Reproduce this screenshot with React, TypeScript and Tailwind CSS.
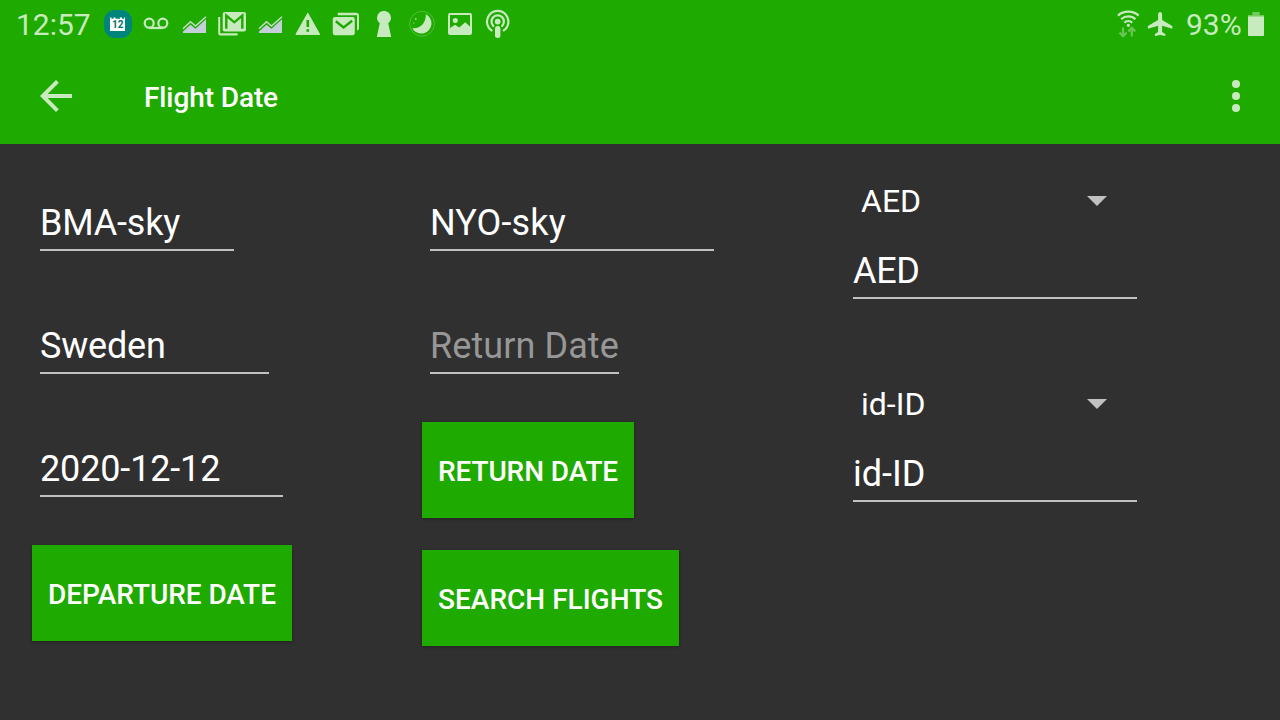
import type { ReactNode } from "react";

const GREEN = "#1faa00";
const TINT = "#c7eabf";

function Slot({ children }: { children: ReactNode }) {
  return (
    <svg width="38" height="48" viewBox="0 0 38 48" fill={TINT} className="block shrink-0">
      {children}
    </svg>
  );
}

function CalendarIcon() {
  return (
    <Slot>
      <rect x="5" y="10" width="28" height="28" rx="11" fill="#00857a" />
      <path d="M11 17.500h1.500v1.300h2v-1.300h2v1.300h4.500v-1.300h2v1.300h2v-1.300H26V31H11z" fill="#fff" />
      <text x="18.700" y="28.400" textAnchor="middle" fontFamily="Roboto, sans-serif" fontSize="10" fontWeight="700" fill="#00736a">12</text>
    </Slot>
  );
}

function VoicemailIcon() {
  return (
    <Slot>
      <g fill="none" stroke={TINT} strokeWidth="2.2">
        <circle cx="12.2" cy="23.2" r="4.5" />
        <circle cx="25.8" cy="23.2" r="4.5" />
        <path d="M12.2 28h13.6" />
      </g>
    </Slot>
  );
}

function ChartIcon() {
  return (
    <Slot>
      <path d="M8 33v-1.500l7.500-6.800 5 4L31 19.300V33z" fill="#c5cfdc" />
      <path d="M8 28.800l7.500-7 5 4.200L31 16.800" fill="none" stroke="#c5dcc8" strokeWidth="1.500" />
    </Slot>
  );
}

function GmailIcon() {
  return (
    <Slot>
      <path d="M5.2 17h2v16.300h17.400v2.200H7.200a2 2 0 0 1-2-2z" />
      <rect x="9.700" y="12" width="23.300" height="19.500" rx="2" />
      <path d="M13.300 28.800V15.500l8 6.800 8-6.800v13.300" fill="none" stroke={GREEN} strokeWidth="2.400" />
    </Slot>
  );
}

function WarningIcon() {
  return (
    <Slot>
      <path d="M18.800 13.200 30.700 34.400H6.900z" stroke={TINT} strokeWidth="1" strokeLinejoin="round" />
      <path d="M17.500 20h2.600v7h-2.600zM17.500 29.200h2.600v2.600h-2.600z" fill={GREEN} />
    </Slot>
  );
}

function MailIcon() {
  return (
    <Slot>
      <path d="M10.800 12.800H29a3 3 0 0 1 3 3v12.500a2.400 2.400 0 0 1-2 2.300V15.200H10.800z" />
      <rect x="5.800" y="17" width="22" height="18.200" rx="2.200" />
      <path d="M8.800 21.200l7.800 6.200 8.500-6.600" fill="none" stroke={GREEN} strokeWidth="2.400" />
    </Slot>
  );
}

function KeyholeIcon() {
  return (
    <Slot>
      <path d="M19 11a6.800 6.800 0 0 1 4.200 12.200L26.200 37H11.800l3-13.800A6.800 6.800 0 0 1 19 11z" />
    </Slot>
  );
}

function MoonIcon() {
  return (
    <Slot>
      <circle cx="19" cy="23.800" r="12.400" fill="none" stroke={TINT} strokeOpacity=".3" strokeWidth="1" />
      <path d="M22.800 14.200A10.200 10.200 0 1 1 9.300 28.200C17 29 23.200 23 22.800 14.200z" />
      <circle cx="12.800" cy="18.800" r=".9" fillOpacity=".9" />
      <circle cx="10.800" cy="23.200" r=".8" fillOpacity=".5" />
    </Slot>
  );
}

function PictureIcon() {
  return (
    <Slot>
      <rect x="8" y="14" width="22" height="20" rx="1" fill="none" stroke={TINT} strokeWidth="2" />
      <circle cx="14.300" cy="20.600" r="2.500" />
      <path d="M8 34v-5.300l6-4 4.200 2.700 6-5.200 5.800 5.400V34z" />
    </Slot>
  );
}

function PodcastIcon() {
  return (
    <Slot>
      <g fill="none" stroke={TINT} strokeWidth="2.200" strokeLinecap="round">
        <path d="M12.600 30.300a10.700 10.700 0 1 1 12.200 0" />
        <path d="M14.300 25.900a6.200 6.200 0 1 1 8.800 0" />
      </g>
      <circle cx="18.700" cy="21.600" r="2.900" />
      <rect x="16" y="26" width="5.400" height="12" rx="2.500" />
    </Slot>
  );
}

function WifiIcon() {
  return (
    <svg width="24" height="48" viewBox="0 0 24 48" className="block shrink-0">
      <g fill="none" stroke={TINT} strokeWidth="2.200">
        <path d="M2 15.600c5.600-5.200 15-5.200 20.600 0" />
        <path d="M5.200 19.200c4-3.700 10.400-3.700 14.200 0" />
        <path d="M8.400 22.600c2.200-2 5.500-2 7.800 0" />
      </g>
      <circle cx="12.400" cy="25.300" r="1.600" fill={TINT} />
      <g fill="none" stroke="#69c654" strokeWidth="2.200">
        <path d="M7 27.500v8.600M3.500 32.600 7 36.100l3.500-3.500M15.800 36.600V28M12.300 31.400l3.500-3.500 3.500 3.500" />
      </g>
    </svg>
  );
}

function PlaneIcon() {
  return (
    <svg width="26" height="48" viewBox="0 0 26 48" fill={TINT} className="block shrink-0">
      <path d="M13.100 12c1.200 0 2 1.200 2 2.700v5.200l10.200 6.200v2.600l-10.200-3v6.200l3.200 2.200v2l-5.200-1.200-5.200 1.200v-2l3.200-2.200v-6.200l-10.200 3v-2.600l10.200-6.200v-5.200c0-1.500.8-2.700 2-2.700z" />
    </svg>
  );
}

function BatteryIcon() {
  return (
    <svg width="16" height="48" viewBox="0 0 16 48" className="block shrink-0">
      <path d="M4.300 12h7.400v3H16v2H0v-2h4.300z" fill="#73cb60" />
      <path d="M0 16.500h16V35a1 1 0 0 1-1 1H1a1 1 0 0 1-1-1z" fill={TINT} />
    </svg>
  );
}

function StatusBar() {
  return (
    <div className="flex h-12 items-center text-[30px] leading-[48px] text-[#c7eabf]">
      <span className="w-[99px] pl-4 pt-[1px]">12:57</span>
      <CalendarIcon />
      <VoicemailIcon />
      <ChartIcon />
      <GmailIcon />
      <ChartIcon />
      <WarningIcon />
      <MailIcon />
      <KeyholeIcon />
      <MoonIcon />
      <PictureIcon />
      <PodcastIcon />
      <div className="ml-auto flex items-center pr-4">
        <WifiIcon />
        <div className="ml-[7px]">
          <PlaneIcon />
        </div>
        <span className="ml-[13px] w-[62px] pt-[1px]">93%</span>
        <BatteryIcon />
      </div>
    </div>
  );
}

function Toolbar() {
  return (
    <div className="flex h-24 items-center pl-10 pr-[39px]">
      <button className="h-8 w-8" aria-label="Back">
        <svg width="32" height="32" viewBox="4 4 16 16" fill={TINT} className="block">
          <path d="M20 11H7.830l5.590-5.590L12 4l-8 8 8 8 1.410-1.410L7.830 13H20v-2z" />
        </svg>
      </button>
      <h1 className="ml-[72px] pt-1 text-[28px] font-medium leading-8 tracking-[-0.1px] text-white">Flight Date</h1>
      <button className="ml-auto flex w-[10px] flex-col items-center gap-1" aria-label="More options">
        <span className="size-2 rounded-full bg-[#c7eabf]" />
        <span className="size-2 rounded-full bg-[#c7eabf]" />
        <span className="size-2 rounded-full bg-[#c7eabf]" />
      </button>
    </div>
  );
}

function Field({ text, className, hint = false }: { text: string; className: string; hint?: boolean }) {
  return (
    <div className={`ml-2 h-[49px] whitespace-nowrap border-b-2 border-[#c1c1c1] text-[36px] leading-[42px] ${hint ? "text-[#979797]" : "text-white"} ${className}`}>
      {text}
    </div>
  );
}

function Spinner({ text }: { text: string }) {
  return (
    <div className="flex h-[38px] w-[262px] items-center justify-between pl-4 text-[32px] leading-[38px] text-white">
      <span>{text}</span>
      <svg width="20" height="10" viewBox="0 0 20 10" className="block">
        <path d="M0 0h20L10 10z" fill="#c1c1c1" />
      </svg>
    </div>
  );
}

function ActionButton({ text, className }: { text: string; className: string }) {
  return (
    <button className={`block h-24 whitespace-nowrap bg-[#1faa00] pt-1 text-center text-[28px] font-medium text-white shadow-[0_1px_3px_rgba(0,0,0,0.3)] ${className}`}>
      {text}
    </button>
  );
}

export default function App() {
  return (
    <div className="flex h-[720px] w-[1280px] flex-col overflow-hidden bg-[#303030] font-['Roboto',sans-serif]">
      <header className="bg-[#1faa00]">
        <StatusBar />
        <Toolbar />
      </header>
      <main className="flex flex-1 pl-8">
        <section className="w-[390px] pt-[58px]">
          <Field text="BMA-sky" className="w-[194px] tracking-[-0.2px]" />
          <Field text="Sweden" className="mt-[74px] w-[229px] tracking-[-0.2px]" />
          <Field text="2020-12-12" className="mt-[74px] w-[243px] tracking-[-0.15px]" />
          <ActionButton text="DEPARTURE DATE" className="mt-12 w-[260px] tracking-[-0.06px]" />
        </section>
        <section className="w-[423px] pt-[58px]">
          <Field text="NYO-sky" className="w-[284px] tracking-[0.15px]" />
          <Field text="Return Date" className="mt-[74px] w-[189px] tracking-[0.08px]" hint />
          <ActionButton text="RETURN DATE" className="mt-12 w-[212px] tracking-[-0.1px]" />
          <ActionButton text="SEARCH FLIGHTS" className="mt-8 w-[257px]" />
        </section>
        <section className="pt-[38px]">
          <Spinner text="AED" />
          <Field text="AED" className="mt-[30px] w-[284px] tracking-[-0.3px]" />
          <div className="mt-[86px]">
            <Spinner text="id-ID" />
          </div>
          <Field text="id-ID" className="mt-[30px] w-[284px]" />
        </section>
      </main>
    </div>
  );
}
